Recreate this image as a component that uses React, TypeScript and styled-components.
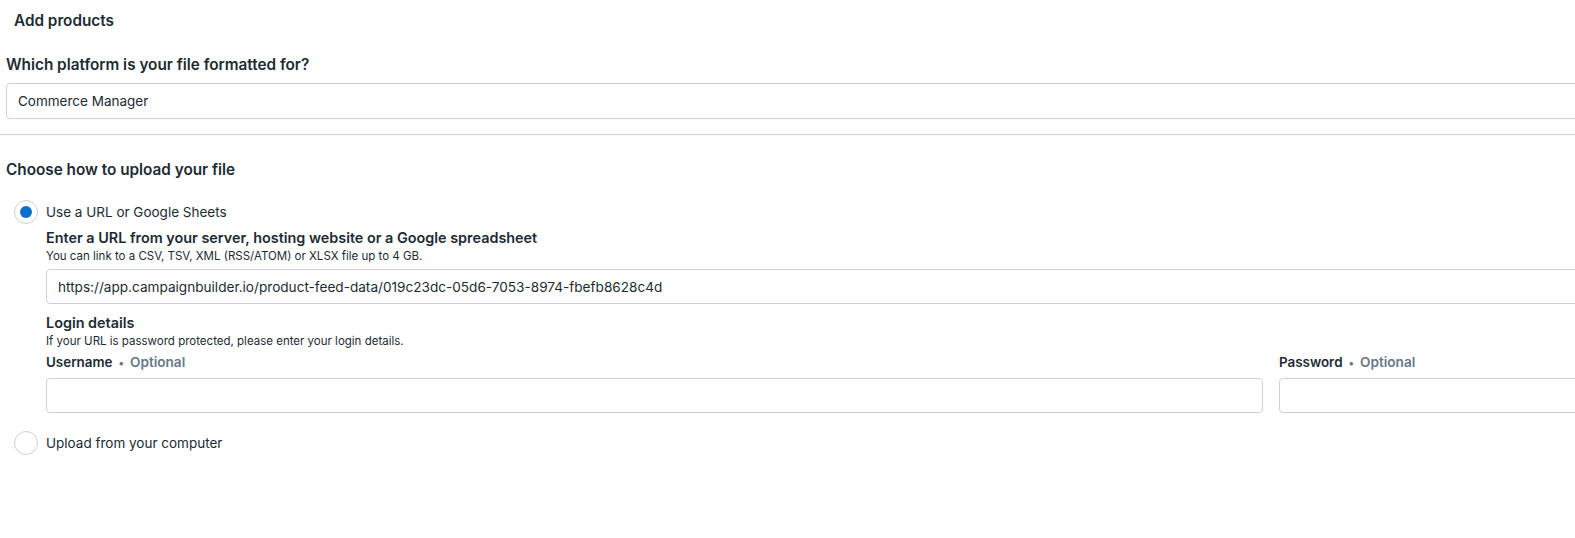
import styled, { createGlobalStyle } from "styled-components";

const GlobalStyle = createGlobalStyle`
  html, body {
    margin: 0;
    padding: 0;
    background: #ffffff;
    overflow: hidden;
  }
  body {
    font-family: Inter, "Noto Sans", "Liberation Sans", sans-serif;
    color: #1c2b33;
  }
`;

const Viewport = styled.div`
  width: 100vw;
  overflow: hidden;
`;

const Page = styled.div`
  width: 2502px;
  display: flex;
  flex-direction: column;
`;

const Section = styled.section`
  display: flex;
  flex-direction: column;
  padding: 0 6px;
`;

const PageTitle = styled.h1`
  margin: 11px 0 0;
  padding-left: 8px;
  font-size: 15.3px;
  line-height: 20px;
  font-weight: 600;
`;

const Heading = styled.h2<{ $top: number }>`
  margin: ${(p) => p.$top}px 0 0;
  font-size: 15.3px;
  line-height: 20px;
  font-weight: 600;
`;

const SelectBox = styled.div`
  margin-top: 8px;
  height: 36px;
  box-sizing: border-box;
  border: 1px solid #cbd2d9;
  border-radius: 4px;
  display: flex;
  align-items: center;
  padding: 0 11px;
  font-size: 13.5px;
`;

const Divider = styled.hr`
  margin: 15px 0 0;
  border: 0;
  border-top: 1px solid #cbd2d9;
`;

const RadioRow = styled.label<{ $top: number }>`
  margin-top: ${(p) => p.$top}px;
  display: flex;
  align-items: center;
  gap: 8px;
  padding-left: 8px;
  font-size: 13.5px;
  line-height: 24px;
`;

const RadioCircle = styled.span<{ $checked?: boolean }>`
  width: 24px;
  height: 24px;
  box-sizing: border-box;
  border-radius: 50%;
  border: 1px solid #cbd2d9;
  display: flex;
  align-items: center;
  justify-content: center;
  background: #ffffff;

  &::after {
    content: "";
    display: ${(p) => (p.$checked ? "block" : "none")};
    width: 12px;
    height: 12px;
    border-radius: 50%;
    background: #0a6fc9;
  }
`;

const Nested = styled.div`
  margin-top: 4px;
  padding-left: 40px;
  display: flex;
  flex-direction: column;
`;

const FieldLabel = styled.div<{ $top?: number }>`
  margin-top: ${(p) => p.$top ?? 0}px;
  font-size: 14.4px;
  line-height: 20px;
  font-weight: 600;
`;

const Helper = styled.div`
  font-size: 11.5px;
  line-height: 16px;
`;

const TextInput = styled.input<{ $top?: number }>`
  margin-top: ${(p) => p.$top ?? 5}px;
  height: 35px;
  box-sizing: border-box;
  width: 100%;
  border: 1px solid #cbd2d9;
  border-radius: 4px;
  padding: 0 11px;
  font-family: inherit;
  font-size: 13.6px;
  color: #1c2b33;
  outline: none;
`;

const Credentials = styled.div`
  margin-top: 3px;
  display: grid;
  grid-template-columns: 1fr 1fr;
  gap: 16px;
`;

const Field = styled.div`
  display: flex;
  flex-direction: column;
`;

const SmallLabel = styled.div`
  display: flex;
  align-items: baseline;
  font-size: 13.4px;
  line-height: 20px;
  font-weight: 600;
`;

const Optional = styled.span`
  color: #67788a;
  font-size: 13.6px;

  &::before {
    content: "•";
    margin: 0 6px;
    font-size: 11px;
  }
`;

const App = () => {
  return (
    <Viewport>
      <GlobalStyle />
      <Page>
        <Section>
          <PageTitle>Add products</PageTitle>
          <Heading $top={24}>Which platform is your file formatted for?</Heading>
          <SelectBox>Commerce Manager</SelectBox>
        </Section>
        <Divider />
        <Section>
          <Heading $top={25}>Choose how to upload your file</Heading>
          <RadioRow $top={20}>
            <RadioCircle $checked />
            Use a URL or Google Sheets
          </RadioRow>
          <Nested>
            <FieldLabel>Enter a URL from your server, hosting website or a Google spreadsheet</FieldLabel>
            <Helper>You can link to a CSV, TSV, XML (RSS/ATOM) or XLSX file up to 4 GB.</Helper>
            <TextInput
              readOnly
              $top={5}
              value="https://app.campaignbuilder.io/product-feed-data/019c23dc-05d6-7053-8974-fbefb8628c4d"
            />
            <FieldLabel $top={9}>Login details</FieldLabel>
            <Helper>If your URL is password protected, please enter your login details.</Helper>
            <Credentials>
              <Field>
                <SmallLabel>
                  Username<Optional>Optional</Optional>
                </SmallLabel>
                <TextInput readOnly />
              </Field>
              <Field>
                <SmallLabel>
                  Password<Optional>Optional</Optional>
                </SmallLabel>
                <TextInput readOnly type="password" />
              </Field>
            </Credentials>
          </Nested>
          <RadioRow $top={18}>
            <RadioCircle />
            Upload from your computer
          </RadioRow>
        </Section>
      </Page>
    </Viewport>
  );
};

export default App;
